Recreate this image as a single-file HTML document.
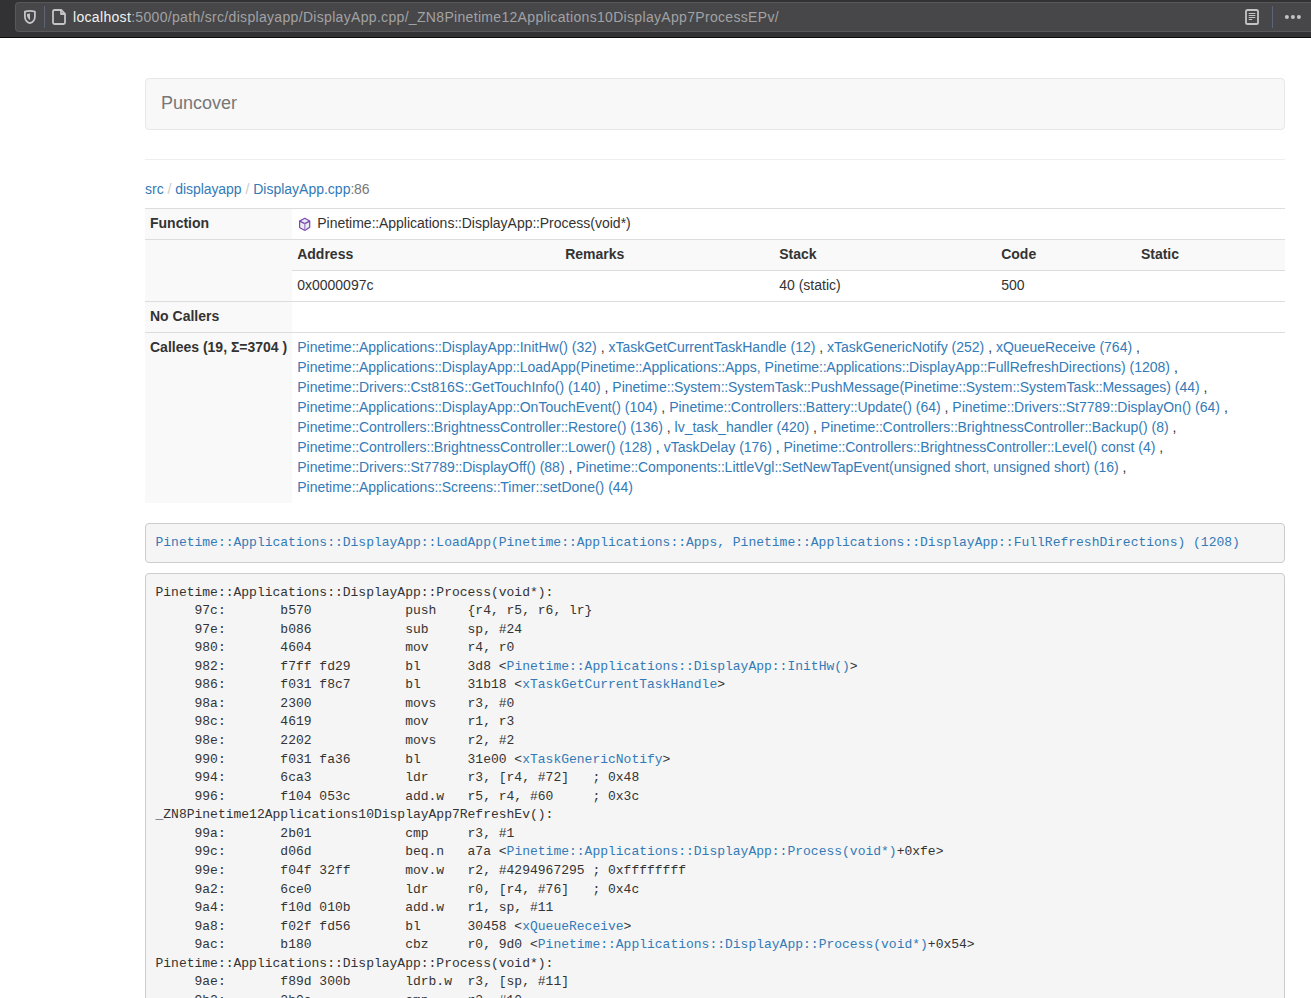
<!DOCTYPE html>
<html>
<head>
<meta charset="utf-8">
<style>
* { box-sizing: border-box; }
html, body { margin: 0; padding: 0; background: #fff; }
body { width: 1311px; height: 998px; overflow: hidden; position: relative; font-family: "Liberation Sans", sans-serif; font-size: 14px; line-height: 20px; color: #333; }
a { color: #337ab7; text-decoration: none; }
#chrome { position: absolute; left: 0; top: 0; width: 1311px; height: 38px; background: #323234; }
#chrome .line { position: absolute; left: 0; top: 37px; width: 1311px; height: 1px; background: #0c0c0d; }
#url { position: absolute; left: 15px; top: 2px; width: 1310px; height: 30px; background: #474749; border: 1px solid #58585a; border-right: none; border-radius: 4px 0 0 4px; }
#urltext { position: absolute; left: 73px; top: 8px; font-size: 14px; line-height: 18px; color: #a2a2a4; white-space: nowrap; letter-spacing: 0.32px; }
#urltext b { font-weight: normal; color: #f2f2f2; }
#page { position: absolute; left: 0; top: 38px; width: 1311px; }
.navbar { position: absolute; left: 145px; top: 40px; width: 1140px; height: 52px; background: #f8f8f8; border: 1px solid #e7e7e7; border-radius: 4px; }
.brand { position: absolute; left: 15px; top: 14px; font-size: 18px; line-height: 20px; color: #777; }
hr { position: absolute; left: 145px; top: 121px; width: 1140px; margin: 0; border: 0; border-top: 1px solid #eee; }
.crumb { position: absolute; left: 145px; top: 141px; line-height: 20px; white-space: nowrap; }
.crumb .sep { color: #ccc; }
.crumb .ln { color: #777; }
table.main { position: absolute; left: 145px; top: 170px; width: 1140px; border-collapse: collapse; border-spacing: 0; table-layout: fixed; }
table.main th, table.main td { padding: 4px 5px 6px; line-height: 20px; vertical-align: top; text-align: left; border-top: 1px solid #ddd; }
table.main th { background: #f9f9f9; font-weight: bold; white-space: nowrap; }
.callees { white-space: nowrap; }
s { text-decoration: none; letter-spacing: -0.266px; }
.fn { position: relative; padding-left: 25px !important; }
.cube { position: absolute; left: 4.8px; top: 7.7px; }
pre { position: absolute; left: 145px; width: 1140px; margin: 0; padding: 9.5px; font-family: "Liberation Mono", monospace; font-size: 13px; line-height: 1.42857143; color: #333; background: #f5f5f5; border: 1px solid #ccc; border-radius: 4px; white-space: pre; tab-size: 8; -moz-tab-size: 8; overflow: hidden; }
.p1 { top: 485px; }
.p2 { top: 535px; height: 600px; }
</style>
</head>
<body>
<div id="chrome">
  <div id="url"></div>
  <div id="urltext"><b>localhost</b>:5000/path/src/displayapp/DisplayApp.cpp/_ZN8Pinetime12Applications10DisplayApp7ProcessEPv/</div>
  <svg style="position:absolute;left:0;top:0" width="1311" height="37" viewBox="0 0 1311 37">
    <g fill="none" stroke="#c4c4c6" stroke-width="1.8" stroke-linejoin="round">
      <path d="M24.9 11.6 Q29.9 10 34.9 11.6 L34.9 16.5 Q34.9 21.6 29.9 23.2 Q24.9 21.6 24.9 16.5 Z"/>
      <path d="M53 11.5 Q53 10 54.5 10 L61.2 10 L65 13.8 L65 22.5 Q65 24 63.5 24 L54.5 24 Q53 24 53 22.5 Z"/>
      <path d="M61 10.2 L61 14 L64.8 14"/>
      <rect x="1246" y="10" width="12" height="14" rx="1.6"/>
    </g>
    <path d="M27 14.1 L30 13.4 L30 20.3 Q27.3 18.6 27 15.8 Z" fill="#c4c4c6"/>
    <g stroke="#c4c4c6" stroke-width="1">
      <line x1="1248.7" y1="13.5" x2="1255.3" y2="13.5"/>
      <line x1="1248.7" y1="15.5" x2="1255.3" y2="15.5"/>
      <line x1="1248.7" y1="17.5" x2="1255.3" y2="17.5"/>
      <line x1="1248.7" y1="19.5" x2="1252.2" y2="19.5"/>
    </g>
    <rect x="44" y="6" width="1" height="22" fill="#5c6577"/>
    <rect x="1272" y="6" width="1" height="22" fill="#5c6577"/>
    <g fill="#c4c4c6"><circle cx="1286.9" cy="17" r="2"/><circle cx="1292.9" cy="17" r="2"/><circle cx="1298.9" cy="17" r="2"/></g>
  </svg>
  <div class="line"></div>
</div>
<div id="page">
  <div class="navbar"><span class="brand">Puncover</span></div>
  <hr>
  <div class="crumb"><a href="#">src</a> <span class="sep">/</span> <a href="#" style="letter-spacing:-0.08px">displayapp</a> <span class="sep">/</span> <a href="#">DisplayApp.cpp</a><span class="ln"><s>:</s>86</span></div>

  <table class="main">
    <colgroup><col style="width:147.2px"><col style="width:268px"><col style="width:214px"><col style="width:222px"><col style="width:139.7px"><col style="width:149.1px"></colgroup>
    <tr><th>Function</th><td colspan="5" class="fn"><svg class="cube" width="14" height="15" viewBox="0 0 14 15"><g transform="translate(-297,-217)"><path d="M304.8 218.3 L309.7 221.1 L309.7 227.3 L304.8 230.4 L299.6 227.4 L299.6 221.1 Z" fill="#ececee" stroke="#7748b5" stroke-width="1.2" stroke-linejoin="round"/><path d="M299.6 221.1 L304.8 223.6 L309.7 221.1" fill="none" stroke="#7748b5" stroke-width="1.2" stroke-linejoin="round"/><path d="M304.8 223.6 L304.8 230.2" fill="none" stroke="#a283cc" stroke-width="1.3"/></g></svg>Pinetime<s>::</s>Applications<s>::</s>DisplayApp<s>::</s>Process(void*)</td></tr>
    <tr><th rowspan="2"></th><th>Address</th><th>Remarks</th><th>Stack</th><th>Code</th><th>Static</th></tr>
    <tr><td>0x0000097c</td><td></td><td>40 (static)</td><td>500</td><td></td></tr>
    <tr><th>No Callers</th><td colspan="5"></td></tr>
    <tr><th>Callees (19, &Sigma;=3704 )</th><td colspan="5" class="callees"><a href="#">Pinetime<s>::</s>Applications<s>::</s>DisplayApp<s>::</s>InitHw() (32)</a> , <a href="#">xTaskGetCurrentTaskHandle (12)</a> , <a href="#">xTaskGenericNotify (252)</a> , <a href="#">xQueueReceive (764)</a> ,<br><a href="#">Pinetime<s>::</s>Applications<s>::</s>DisplayApp<s>::</s>LoadApp(Pinetime<s>::</s>Applications<s>::</s>Apps, Pinetime<s>::</s>Applications<s>::</s>DisplayApp<s>::</s>FullRefreshDirections) (1208)</a> ,<br><a href="#">Pinetime<s>::</s>Drivers<s>::</s>Cst816S<s>::</s>GetTouchInfo() (140)</a> , <a href="#">Pinetime<s>::</s>System<s>::</s>SystemTask<s>::</s>PushMessage(Pinetime<s>::</s>System<s>::</s>SystemTask<s>::</s>Messages) (44)</a> ,<br><a href="#">Pinetime<s>::</s>Applications<s>::</s>DisplayApp<s>::</s>OnTouchEvent() (104)</a> , <a href="#">Pinetime<s>::</s>Controllers<s>::</s>Battery<s>::</s>Update() (64)</a> , <a href="#">Pinetime<s>::</s>Drivers<s>::</s>St7789<s>::</s>DisplayOn() (64)</a> ,<br><a href="#">Pinetime<s>::</s>Controllers<s>::</s>BrightnessController<s>::</s>Restore() (136)</a> , <a href="#">lv_task_handler (420)</a> , <a href="#">Pinetime<s>::</s>Controllers<s>::</s>BrightnessController<s>::</s>Backup() (8)</a> ,<br><a href="#">Pinetime<s>::</s>Controllers<s>::</s>BrightnessController<s>::</s>Lower() (128)</a> , <a href="#">vTaskDelay (176)</a> , <a href="#">Pinetime<s>::</s>Controllers<s>::</s>BrightnessController<s>::</s>Level() const (4)</a> ,<br><a href="#">Pinetime<s>::</s>Drivers<s>::</s>St7789<s>::</s>DisplayOff() (88)</a> , <a href="#">Pinetime<s>::</s>Components<s>::</s>LittleVgl<s>::</s>SetNewTapEvent(unsigned short, unsigned short) (16)</a> ,<br><a href="#">Pinetime<s>::</s>Applications<s>::</s>Screens<s>::</s>Timer<s>::</s>setDone() (44)</a></td></tr>
  </table>

  <pre class="p1"><a href="#">Pinetime::Applications::DisplayApp::LoadApp(Pinetime::Applications::Apps, Pinetime::Applications::DisplayApp::FullRefreshDirections) (1208)</a></pre>
  <pre class="p2">Pinetime::Applications::DisplayApp::Process(void*):
     97c:	b570      	push	{r4, r5, r6, lr}
     97e:	b086      	sub	sp, #24
     980:	4604      	mov	r4, r0
     982:	f7ff fd29 	bl	3d8 &lt;<a href="#">Pinetime::Applications::DisplayApp::InitHw()</a>&gt;
     986:	f031 f8c7 	bl	31b18 &lt;<a href="#">xTaskGetCurrentTaskHandle</a>&gt;
     98a:	2300      	movs	r3, #0
     98c:	4619      	mov	r1, r3
     98e:	2202      	movs	r2, #2
     990:	f031 fa36 	bl	31e00 &lt;<a href="#">xTaskGenericNotify</a>&gt;
     994:	6ca3      	ldr	r3, [r4, #72]	; 0x48
     996:	f104 053c 	add.w	r5, r4, #60	; 0x3c
_ZN8Pinetime12Applications10DisplayApp7RefreshEv():
     99a:	2b01      	cmp	r3, #1
     99c:	d06d      	beq.n	a7a &lt;<a href="#">Pinetime::Applications::DisplayApp::Process(void*)</a>+0xfe&gt;
     99e:	f04f 32ff 	mov.w	r2, #4294967295	; 0xffffffff
     9a2:	6ce0      	ldr	r0, [r4, #76]	; 0x4c
     9a4:	f10d 010b 	add.w	r1, sp, #11
     9a8:	f02f fd56 	bl	30458 &lt;<a href="#">xQueueReceive</a>&gt;
     9ac:	b180      	cbz	r0, 9d0 &lt;<a href="#">Pinetime::Applications::DisplayApp::Process(void*)</a>+0x54&gt;
Pinetime::Applications::DisplayApp::Process(void*):
     9ae:	f89d 300b 	ldrb.w	r3, [sp, #11]
     9b2:	2b0a      	cmp	r3, #10
     9b4:	d1f2      	bne.n	99c &lt;<a href="#">Pinetime::Applications::DisplayApp::Process(void*)</a>+0x20&gt;</pre>
</div>
</body>
</html>
